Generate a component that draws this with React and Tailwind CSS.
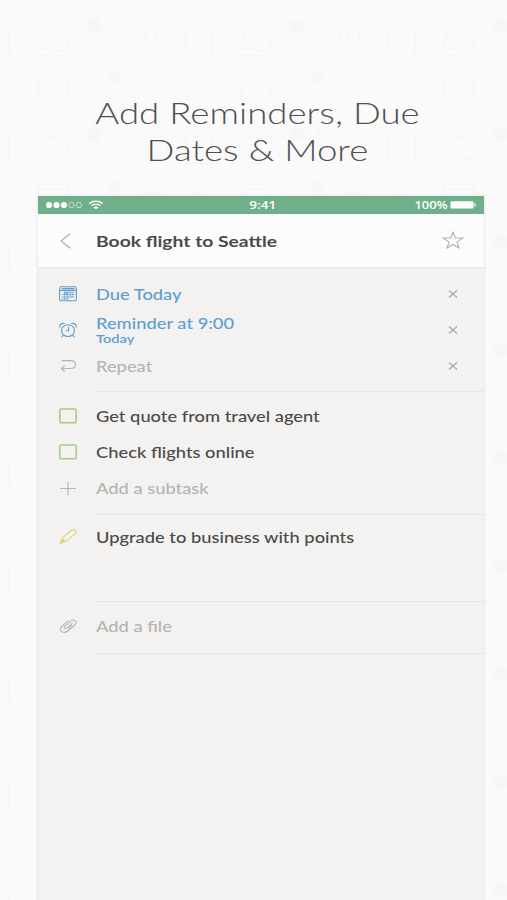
import React from 'react';

const Icon = ({ className = '', children, ...rest }) => (
    <svg viewBox="0 0 18 16" width="18" height="16" fill="none" stroke="currentColor" strokeWidth="1.1" strokeLinecap="round" strokeLinejoin="round" className={className} {...rest}>
        {children}
    </svg>
);

const CalendarIcon = () => (
    <Icon className="text-[#5d9fd0]">
        <rect x="0.6" y="0.8" width="16.8" height="14" rx="1.6" />
        <path d="M0.8 4.4h16.4M3 2.6h12" />
        <path d="M5.5 6.2h9.5M3 8.6h12M3 11h12M3 13h6.5M5.5 6.2V13M8.2 6.2V13M10.9 6.2V11M13.2 6.2V11" strokeWidth="0.7" />
        <rect x="6.5" y="6.6" width="2.2" height="2" fill="currentColor" stroke="none" />
    </Icon>
);

const AlarmIcon = () => (
    <Icon className="text-[#5d9fd0]">
        <ellipse cx="9" cy="8.6" rx="6.5" ry="5.9" />
        <path d="M9.6 5.2v3.6H7M4.2 13.2 3 14.9M13.8 13.2l1.2 1.7" />
        <path d="M0.9 5.2C0.2 2.9 2.5 0.7 5.3 1.6M17.1 5.2c0.7-2.3-1.6-4.5-4.4-3.6" />
    </Icon>
);

const RepeatIcon = () => (
    <Icon className="text-[#b4b4b2]">
        <path d="M3.2 2.6h8.6c2.8 0 4.6 1.6 4.6 3.9s-1.8 4-4.6 4H2.4M5.6 7.6l-3.2 2.9 3.2 3" />
    </Icon>
);

const Checkbox = () => (
    <Icon className="text-[#a3cb80]" strokeWidth="1.5">
        <rect x="0.8" y="1" width="16.4" height="13.8" rx="1.8" />
    </Icon>
);

const PlusIcon = () => (
    <Icon className="text-[#b4b4b2]">
        <path d="M1.5 8.5h15M9 2v13" />
    </Icon>
);

const PencilIcon = () => (
    <Icon className="text-[#e3d070]">
        <path d="M3.6 8.6 11.6 2c1.4-1.1 3.7-1.3 5-.6.9.9.5 2.4-.6 3.4L8 11.7 3.5 13Z" />
        <path d="M3.3 10.2 6.4 12.2 0.8 15Z" fill="currentColor" strokeWidth="0.7" />
    </Icon>
);

// Two nested loops, tilted towards the upper right.
const ClipIcon = () => (
    <Icon className="text-[#b4b4b2]">
        <path d="M13.3 5.2 7.9 10.1c-1.9 1.5-3.9-.1-2.2-1.8l5.8-5.2c3-2.4 7.4.1 4.7 3.4l-6.6 6c-4.6 4-10.6.6-7.3-3.7l6.3-5.6" />
        <path d="M12.6 7.3 9.3 10.4" />
    </Icon>
);

const CloseIcon = () => (
    <svg viewBox="0 0 10 8" width="10" height="8" fill="none" stroke="#a9a9a7" strokeWidth="1.2" className="mr-[26px]">
        <path d="m1 .5 8 7M9 .5l-8 7" />
    </svg>
);

const BackIcon = () => (
    <Icon className="text-[#b0b0b0]">
        <path d="M11 1 2 8l9 7" strokeWidth="1.2" />
    </Icon>
);

const StarIcon = () => (
    <svg viewBox="0 0 22 18" width="22" height="18" fill="none" stroke="#b0b0b0" strokeWidth="1.1" className="mr-[20px] mb-[2px]">
        <path d="m11 1.2 2.3 5.7 7.5.1-5.9 4.1 2.2 5.9L11 13.5 4.9 17l2.2-5.9L1.2 7l7.5-.1Z" />
    </svg>
);

const StatusBar = () => (
    <div className="grid h-[18px] grid-cols-3 items-center bg-[#6fb08a] text-white">
        <svg viewBox="0 0 60 12" width="60" height="12" className="ml-[7px]">
            {[4, 11.5, 19].map((x) => <circle key={x} cx={x} cy="6" r="3.1" fill="white" />)}
            {[26.5, 34].map((x) => <circle key={x} cx={x} cy="6" r="2.7" fill="none" stroke="white" strokeWidth="0.6" />)}
            <g fill="none" stroke="white" strokeWidth="1.5">
                <path d="M44.3 4.6c3.8-3.1 9.6-3.1 13.4 0M46.6 6.7c2.5-2 6.3-2 8.8 0" />
            </g>
            <path d="M48.4 8.3c1.5-1.2 3.7-1.2 5.2 0L51 10.2Z" fill="white" />
        </svg>
        <span className="ml-[3px] scale-x-[1.18] text-center font-['Open_Sans',sans-serif] text-[11.5px] leading-none font-semibold">9:41</span>
        <div className="flex items-center justify-end pr-[7px]">
            <span className="origin-right scale-x-[1.12] font-['Open_Sans',sans-serif] text-[11.5px] leading-none font-semibold">100%</span>
            <svg viewBox="0 0 27 8" width="27" height="8" className="ml-[2px]">
                <rect x="0.5" y="0.3" width="23" height="7.2" rx="1.2" fill="white" />
                <path d="M24.4 2c2 .7 2 3 0 3.8Z" fill="white" />
            </svg>
        </div>
    </div>
);

const Row = ({ icon, closable, className = 'h-9', children }) => (
    <div className={`flex items-center ${className}`}>
        <div className="ml-[20.5px] w-[37.5px] shrink-0">{icon}</div>
        <div className="flex-1">{children}</div>
        {closable ? <CloseIcon /> : null}
    </div>
);

const Label = ({ className = 'text-[15px] leading-[18px] font-medium', children }) => (
    <span className={`block w-max origin-left scale-x-[1.22] whitespace-nowrap ${className}`}>{children}</span>
);

const Muted = ({ children }) => <Label className="text-[15px] leading-[18px] font-medium text-[#b4b4b2]">{children}</Label>;

const Divider = () => <div className="ml-[59px] h-px shrink-0 bg-[#e6e6e4]" />;

// Very pale wallpaper of small office glyphs behind the phone.
const Wallpaper = () => (
    <svg width="507" height="900" className="absolute inset-0">
        <defs>
            <pattern id="glyphs" width="203" height="108" patternUnits="userSpaceOnUse" x="24" y="10">
                <g fill="none" stroke="#f7f7f7" strokeWidth="2">
                    <path d="m12 38 8-20 26 3-4 20ZM14 46h24" />
                    <circle cx="94" cy="15" r="3" />
                    <path d="M112 30c0-16 32-16 32 0v6h-32ZM122 22v14M132 22v14" />
                    <rect x="162" y="16" width="26" height="30" rx="3" />
                    <path d="M14 66h30v20H14ZM14 72h30M112 70c10-9 22-9 30 0M118 78c6-5 14-5 18 0M162 68l24 20M186 68l-24 20" />
                </g>
                <g fill="#f7f7f7">
                    <circle cx="70" cy="16" r="8" />
                    <circle cx="91" cy="68" r="7" />
                </g>
            </pattern>
        </defs>
        <rect width="507" height="900" fill="url(#glyphs)" />
    </svg>
);

export default function App() {
    return (
        <div className="relative h-[900px] w-[507px] overflow-hidden bg-[#fafafa] font-['Lato',sans-serif] text-[#4a4a4a]">
            <Wallpaper />
            <div className="relative flex h-full flex-col">
                <h1 className="ml-2 h-[196px] scale-x-[1.222] pt-[94px] text-center text-[30px] leading-[37px] font-light text-[#505050]">
                    Add Reminders, Due
                    <br />
                    Dates &amp; More
                </h1>

                <div className="ml-[38px] flex w-[445.5px] flex-1 flex-col bg-[#f3f2f0] shadow-[0_0_2px_1px_rgba(0,0,0,0.07)]">
                    <StatusBar />
                    <div className="h-[55px] border-b-2 border-[#ececea] bg-[#fcfcfc]">
                        <Row icon={<BackIcon />} className="h-[53px]">
                            <div className="flex items-center justify-between">
                                <Label className="text-[15.8px] leading-[18px] font-bold">Book flight to Seattle</Label>
                                <StarIcon />
                            </div>
                        </Row>
                    </div>

                    <div className="pt-[7px] pb-[7px] text-[#5d9fd0]">
                        <Row icon={<CalendarIcon />} closable>
                            <Label>Due Today</Label>
                        </Row>
                        <Row icon={<AlarmIcon />} closable>
                            <Label className="text-[15px] leading-[18px] font-medium">Reminder at 9:00</Label>
                            <Label className="text-[12px] leading-[14px] font-semibold">Today</Label>
                        </Row>
                        <Row icon={<RepeatIcon />} closable>
                            <Muted>Repeat</Muted>
                        </Row>
                    </div>
                    <Divider />

                    <div className="pt-[6px] pb-[8px]">
                        <Row icon={<Checkbox />}>
                            <Label>Get quote from travel agent</Label>
                        </Row>
                        <Row icon={<Checkbox />}>
                            <Label>Check flights online</Label>
                        </Row>
                        <Row icon={<PlusIcon />}>
                            <Muted>Add a subtask</Muted>
                        </Row>
                    </div>
                    <Divider />

                    <div className="h-[86px] pt-[4px]">
                        <Row icon={<PencilIcon />}>
                            <Label>Upgrade to business with points</Label>
                        </Row>
                    </div>
                    <Divider />

                    <Row icon={<ClipIcon />} className="h-[51px] pb-[3px]">
                        <Muted>Add a file</Muted>
                    </Row>
                    <Divider />
                </div>
            </div>
        </div>
    );
}
